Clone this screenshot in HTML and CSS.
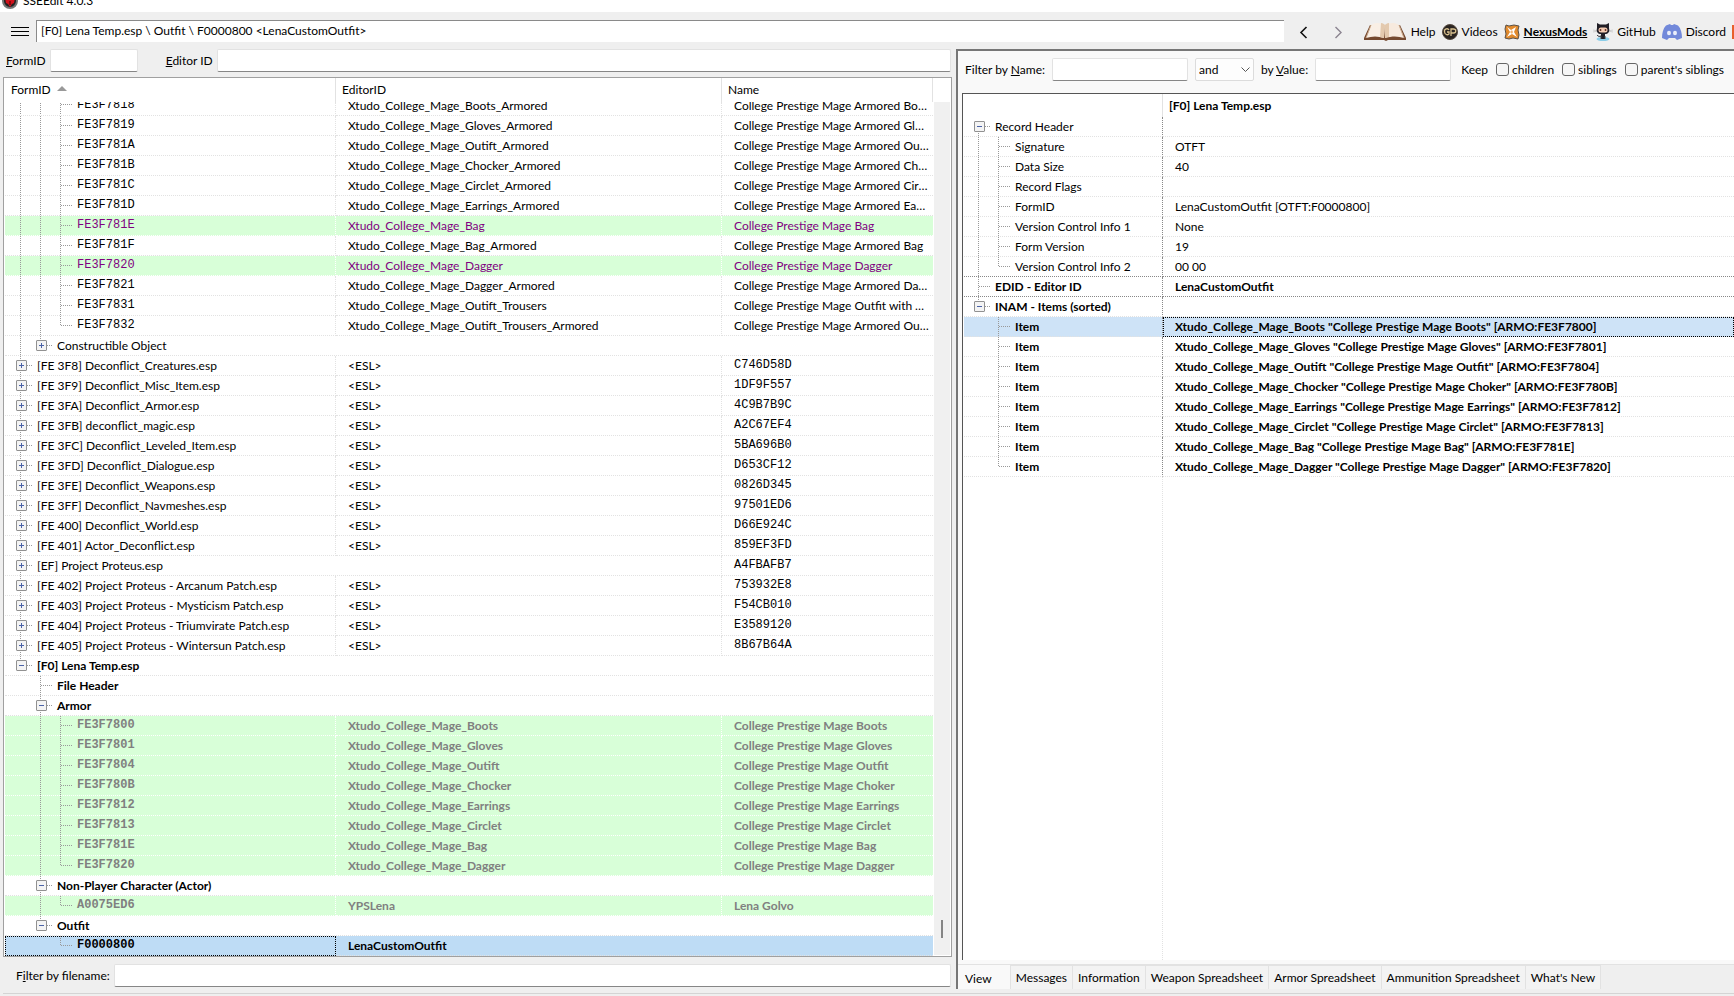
FILE: index.html
```html
<!DOCTYPE html>
<html lang="en">
<head>
    <meta charset="utf-8">
    <title>SSEEdit 4.0.3</title>
    <link rel="stylesheet" href="styles.css">
</head>
<body>
    <header class="titlebar">
        <svg width="16" height="16" viewBox="0 0 16 16"><circle cx="8" cy="8" r="7" fill="#222" stroke="#777" stroke-width="2"/><path d="M3 5l3 2 2-2 2 2 3-2-1 5-2 1-2 3-2-3-2-1z" fill="#d3121c"/><path d="M8 8v4" stroke="#400"/></svg>
        <span>SSEEdit 4.0.3</span>
    </header>

    <nav class="toolbar">
        <button class="menu-btn" aria-label="Menu"><svg width="18" height="10" viewBox="0 0 18 10"><path d="M0 .5h18M0 4.500h18M0 8.500h18" stroke="#000"/></svg></button>
        <input class="path" type="text" aria-label="Path" value="[F0] Lena Temp.esp \ Outfit \ F0000800 &lt;LenaCustomOutfit&gt;">
        <div class="history">
            <button aria-label="Back"><svg width="9" height="13" viewBox="0 0 9 13"><path d="M7.500 1L2 6.500 7.500 12" fill="none" stroke="#111" stroke-width="1.600"/></svg></button>
            <button aria-label="Forward"><svg width="9" height="13" viewBox="0 0 9 13"><path d="M1.500 1L7 6.500 1.500 12" fill="none" stroke="#8b8490" stroke-width="1.400"/></svg></button>
        </div>
        <div class="links">
            <a href="#help">
                <svg width="44" height="18" viewBox="0 0 44 18"><path d="M7 2L1 15v2h20l2 1 2-1h18v-2L37 2z" fill="#75492f"/><path d="M8 2C13-1 18 0 22 2l-1 13C15 13 9 13 3 15z" fill="#f9efe5"/><path d="M22 2c4-2 9-3 14 0l5 13c-6-2-12-2-19 0z" fill="#f7eade"/><path d="M18 0c2 0 3 1 4 2l-1 13-4-1zM26 0c-2 0-3 1-4 2v13l4-1z" fill="#e3c9ae"/><path d="M8 2L3 15M36 2l5 13" fill="none" stroke="#c9a78a"/></svg>
                Help</a>
            <a href="#videos">
                <svg width="16" height="16" viewBox="0 0 16 16"><circle cx="8" cy="8" r="7.500" fill="#2a2420" stroke="#55493f"/><path d="M7 6C6 4 2 4.500 2.500 8S6.500 11 7 10V8H5M9 12V5h2.500c3 0 3 4 0 4H9" fill="none" stroke="#d8c08e" stroke-width="1.300"/></svg>
                Videos</a>
            <a href="#nexus" class="current">
                <svg width="16" height="16" viewBox="0 0 16 16"><path d="M2 1l3 1 5-1 5 1-1 4 1 5-1 4-5-1-4 1-4-1 1-4-1-5z" fill="#e28a2c" stroke="#5a5148"/><path d="M3 3l4 3 5-3-2 5 3 5-5-3-5 3 3-5z" fill="#fff"/><path d="M8 6l1 2-1 2-2-2z" fill="#f1b271"/></svg>
                <span>NexusMods</span></a>
            <a href="#github" class="github">
                <svg width="20" height="18" viewBox="0 0 20 18"><ellipse cx="10" cy="16" rx="6.500" ry="2" fill="#8bcde8"/><path d="M0 9l5-1M0 7l5 1M15 8l5-1M15 8l5 1" stroke="#bbb" stroke-width=".6"/><path d="M4 0l3 1.500h6L16 0v5c1 4-1 6-4 6v5H8v-5C5 11 3 9 4 5z" fill="#211e26"/><rect x="5.500" y="4.500" width="9" height="5" rx="2.500" fill="#f4cbb2"/><path d="M7.500 6v2M12.500 6v2" stroke="#6b3a2d" stroke-width="1.500"/><path d="M8 13c-2 1-3 0-4-1" fill="none" stroke="#211e26"/><path d="M8 16v-3M12 16v-3" stroke="#444"/></svg>
                GitHub</a>
            <a href="#discord">
                <svg width="20" height="16" viewBox="0 0 20 16"><path d="M4 1.500L8 0l1 1h2l1-1 4 1.500c3 3 4 8 4 12.500l-5 2-2-2H7l-2 2-5-2C0 9.500 1 4.500 4 1.500z" fill="#7289da"/><ellipse cx="7" cy="9" rx="2" ry="2.200" fill="#e9edfa"/><ellipse cx="13" cy="9" rx="2" ry="2.200" fill="#e9edfa"/></svg>
                Discord</a>
            <a href="#patreon" class="patreon" aria-label="Patreon"><svg width="14" height="14" viewBox="0 0 14 14"><path d="M0 0h14v14H0z" fill="#e8602c"/></svg></a>
        </div>
    </nav>

    <main class="main">
        <section class="left">
            <div class="search">
                <label for="formid"><u>F</u>ormID</label>
                <input id="formid" class="box formid" type="text">
                <label for="editorid"><u>E</u>ditor ID</label>
                <input id="editorid" class="box grow" type="text">
            </div>

            <div class="nav-tree">
                <table class="tree">
                    <colgroup><col class="col-id"><col class="col-editor"><col></colgroup>
                    <thead>
                        <tr><th>FormID <svg class="sort" width="10" height="5" viewBox="0 0 10 5"><path d="M5 0l5 5H0z" fill="#999"/></svg></th><th>EditorID</th><th>Name</th></tr>
                    </thead>
                    <tbody>
                        <tr class="cut"><td><div class="c"><i class="v"></i><i class="v"></i><i class="t"></i><code>FE3F7818</code></div></td><td><div class="c">Xtudo_College_Mage_Boots_Armored</div></td><td><div class="c"><span>College Prestige Mage Armored Boots</span></div></td></tr>
                        <tr><td><div class="c"><i class="v"></i><i class="v"></i><i class="t"></i><code>FE3F7819</code></div></td><td>Xtudo_College_Mage_Gloves_Armored</td><td>College Prestige Mage Armored Gloves</td></tr>
                        <tr><td><div class="c"><i class="v"></i><i class="v"></i><i class="t"></i><code>FE3F781A</code></div></td><td>Xtudo_College_Mage_Outift_Armored</td><td>College Prestige Mage Armored Outfit</td></tr>
                        <tr><td><div class="c"><i class="v"></i><i class="v"></i><i class="t"></i><code>FE3F781B</code></div></td><td>Xtudo_College_Mage_Chocker_Armored</td><td>College Prestige Mage Armored Choker</td></tr>
                        <tr><td><div class="c"><i class="v"></i><i class="v"></i><i class="t"></i><code>FE3F781C</code></div></td><td>Xtudo_College_Mage_Circlet_Armored</td><td>College Prestige Mage Armored Circlet</td></tr>
                        <tr><td><div class="c"><i class="v"></i><i class="v"></i><i class="t"></i><code>FE3F781D</code></div></td><td>Xtudo_College_Mage_Earrings_Armored</td><td>College Prestige Mage Armored Earrings</td></tr>
                        <tr class="green purple"><td><div class="c"><i class="v"></i><i class="v"></i><i class="t"></i><code>FE3F781E</code></div></td><td>Xtudo_College_Mage_Bag</td><td>College Prestige Mage Bag</td></tr>
                        <tr><td><div class="c"><i class="v"></i><i class="v"></i><i class="t"></i><code>FE3F781F</code></div></td><td>Xtudo_College_Mage_Bag_Armored</td><td>College Prestige Mage Armored Bag</td></tr>
                        <tr class="green purple"><td><div class="c"><i class="v"></i><i class="v"></i><i class="t"></i><code>FE3F7820</code></div></td><td>Xtudo_College_Mage_Dagger</td><td>College Prestige Mage Dagger</td></tr>
                        <tr><td><div class="c"><i class="v"></i><i class="v"></i><i class="t"></i><code>FE3F7821</code></div></td><td>Xtudo_College_Mage_Dagger_Armored</td><td>College Prestige Mage Armored Dagger</td></tr>
                        <tr><td><div class="c"><i class="v"></i><i class="v"></i><i class="t"></i><code>FE3F7831</code></div></td><td>Xtudo_College_Mage_Outift_Trousers</td><td>College Prestige Mage Outfit with Trousers</td></tr>
                        <tr><td><div class="c"><i class="v"></i><i class="v"></i><i class="e"></i><code>FE3F7832</code></div></td><td>Xtudo_College_Mage_Outift_Trousers_Armored</td><td>College Prestige Mage Armored Outfit with Trousers</td></tr>
                        <tr><td colspan="3"><div class="c"><i class="v"></i><button class="e plus" aria-label="Expand"></button>Constructible Object</div></td></tr>
                        <tr><td><div class="c"><button class="t plus" aria-label="Expand"></button>[FE 3F8] Deconflict_Creatures.esp</div></td><td>&lt;ESL&gt;</td><td><code>C746D58D</code></td></tr>
                        <tr><td><div class="c"><button class="t plus" aria-label="Expand"></button>[FE 3F9] Deconflict_Misc_Item.esp</div></td><td>&lt;ESL&gt;</td><td><code>1DF9F557</code></td></tr>
                        <tr><td><div class="c"><button class="t plus" aria-label="Expand"></button>[FE 3FA] Deconflict_Armor.esp</div></td><td>&lt;ESL&gt;</td><td><code>4C9B7B9C</code></td></tr>
                        <tr><td><div class="c"><button class="t plus" aria-label="Expand"></button>[FE 3FB] deconflict_magic.esp</div></td><td>&lt;ESL&gt;</td><td><code>A2C67EF4</code></td></tr>
                        <tr><td><div class="c"><button class="t plus" aria-label="Expand"></button>[FE 3FC] Deconflict_Leveled_Item.esp</div></td><td>&lt;ESL&gt;</td><td><code>5BA696B0</code></td></tr>
                        <tr><td><div class="c"><button class="t plus" aria-label="Expand"></button>[FE 3FD] Deconflict_Dialogue.esp</div></td><td>&lt;ESL&gt;</td><td><code>D653CF12</code></td></tr>
                        <tr><td><div class="c"><button class="t plus" aria-label="Expand"></button>[FE 3FE] Deconflict_Weapons.esp</div></td><td>&lt;ESL&gt;</td><td><code>0826D345</code></td></tr>
                        <tr><td><div class="c"><button class="t plus" aria-label="Expand"></button>[FE 3FF] Deconflict_Navmeshes.esp</div></td><td>&lt;ESL&gt;</td><td><code>97501ED6</code></td></tr>
                        <tr><td><div class="c"><button class="t plus" aria-label="Expand"></button>[FE 400] Deconflict_World.esp</div></td><td>&lt;ESL&gt;</td><td><code>D66E924C</code></td></tr>
                        <tr><td><div class="c"><button class="t plus" aria-label="Expand"></button>[FE 401] Actor_Deconflict.esp</div></td><td>&lt;ESL&gt;</td><td><code>859EF3FD</code></td></tr>
                        <tr><td colspan="2"><div class="c"><button class="t plus" aria-label="Expand"></button>[EF] Project Proteus.esp</div></td><td><code>A4FBAFB7</code></td></tr>
                        <tr><td><div class="c"><button class="t plus" aria-label="Expand"></button>[FE 402] Project Proteus - Arcanum Patch.esp</div></td><td>&lt;ESL&gt;</td><td><code>753932E8</code></td></tr>
                        <tr><td><div class="c"><button class="t plus" aria-label="Expand"></button>[FE 403] Project Proteus - Mysticism Patch.esp</div></td><td>&lt;ESL&gt;</td><td><code>F54CB010</code></td></tr>
                        <tr><td><div class="c"><button class="t plus" aria-label="Expand"></button>[FE 404] Project Proteus - Triumvirate Patch.esp</div></td><td>&lt;ESL&gt;</td><td><code>E3589120</code></td></tr>
                        <tr><td><div class="c"><button class="t plus" aria-label="Expand"></button>[FE 405] Project Proteus - Wintersun Patch.esp</div></td><td>&lt;ESL&gt;</td><td><code>8B67B64A</code></td></tr>
                        <tr class="bold"><td colspan="3"><div class="c"><button class="e" aria-label="Collapse"></button>[F0] Lena Temp.esp</div></td></tr>
                        <tr class="bold"><td colspan="3"><div class="c"><i></i><i class="t"></i>File Header</div></td></tr>
                        <tr class="bold"><td colspan="3"><div class="c"><i></i><button class="t" aria-label="Collapse"></button>Armor</div></td></tr>
                        <tr class="green gray"><td><div class="c"><i></i><i class="v"></i><i class="t"></i><code>FE3F7800</code></div></td><td>Xtudo_College_Mage_Boots</td><td>College Prestige Mage Boots</td></tr>
                        <tr class="green gray"><td><div class="c"><i></i><i class="v"></i><i class="t"></i><code>FE3F7801</code></div></td><td>Xtudo_College_Mage_Gloves</td><td>College Prestige Mage Gloves</td></tr>
                        <tr class="green gray"><td><div class="c"><i></i><i class="v"></i><i class="t"></i><code>FE3F7804</code></div></td><td>Xtudo_College_Mage_Outift</td><td>College Prestige Mage Outfit</td></tr>
                        <tr class="green gray"><td><div class="c"><i></i><i class="v"></i><i class="t"></i><code>FE3F780B</code></div></td><td>Xtudo_College_Mage_Chocker</td><td>College Prestige Mage Choker</td></tr>
                        <tr class="green gray"><td><div class="c"><i></i><i class="v"></i><i class="t"></i><code>FE3F7812</code></div></td><td>Xtudo_College_Mage_Earrings</td><td>College Prestige Mage Earrings</td></tr>
                        <tr class="green gray"><td><div class="c"><i></i><i class="v"></i><i class="t"></i><code>FE3F7813</code></div></td><td>Xtudo_College_Mage_Circlet</td><td>College Prestige Mage Circlet</td></tr>
                        <tr class="green gray"><td><div class="c"><i></i><i class="v"></i><i class="t"></i><code>FE3F781E</code></div></td><td>Xtudo_College_Mage_Bag</td><td>College Prestige Mage Bag</td></tr>
                        <tr class="green gray"><td><div class="c"><i></i><i class="v"></i><i class="e"></i><code>FE3F7820</code></div></td><td>Xtudo_College_Mage_Dagger</td><td>College Prestige Mage Dagger</td></tr>
                        <tr class="bold"><td colspan="3"><div class="c"><i></i><button class="t" aria-label="Collapse"></button>Non-Player Character (Actor)</div></td></tr>
                        <tr class="green gray"><td><div class="c"><i></i><i class="v"></i><i class="e"></i><code>A0075ED6</code></div></td><td>YPSLena</td><td>Lena Golvo</td></tr>
                        <tr class="bold"><td colspan="3"><div class="c"><i></i><button class="e" aria-label="Collapse"></button>Outfit</div></td></tr>
                        <tr class="bold selected"><td class="focus"><div class="c"><i></i><i></i><i class="e"></i><code>F0000800</code></div></td><td colspan="2">LenaCustomOutfit</td></tr>
                    </tbody>
                </table>
                <div class="scrollbar"><div class="thumb"></div></div>
            </div>

            <div class="file-filter">
                <label for="filename">F<u>i</u>lter by filename:</label>
                <input id="filename" class="box grow" type="text">
            </div>
        </section>

        <section class="right">
            <div class="view">
                <div class="filters">
                    <label for="byname">Filter by <u>N</u>ame:</label>
                    <input id="byname" class="box filter-text" type="text">
                    <div class="combo">
                        <select aria-label="Operator"><option>and</option><option>or</option></select>
                        <svg width="9" height="5" viewBox="0 0 9 5"><path d="M.5.500l4 4 4-4" fill="none" stroke="#555"/></svg>
                    </div>
                    <label for="byvalue">by <u>V</u>alue:</label>
                    <input id="byvalue" class="box filter-text" type="text">
                    <div class="keep">
                        <span>Keep</span>
                        <label><input type="checkbox">children</label>
                        <label><input type="checkbox">siblings</label>
                        <label><input type="checkbox">parent's siblings</label>
                    </div>
                </div>
                <div class="record">
                    <table class="tree record-table">
                        <colgroup><col class="col-label"><col></colgroup>
                        <thead><tr><th></th><th>[F0] Lena Temp.esp</th></tr></thead>
                        <tbody>
                            <tr><td><div class="c"><button class="f" aria-label="Collapse"></button>Record Header</div></td><td></td></tr>
                            <tr><td><div class="c"><i class="v"></i><i class="t"></i>Signature</div></td><td>OTFT</td></tr>
                            <tr><td><div class="c"><i class="v"></i><i class="t"></i>Data Size</div></td><td>40</td></tr>
                            <tr><td><div class="c"><i class="v"></i><i class="t"></i>Record Flags</div></td><td></td></tr>
                            <tr><td><div class="c"><i class="v"></i><i class="t"></i>FormID</div></td><td>LenaCustomOutfit [OTFT:F0000800]</td></tr>
                            <tr><td><div class="c"><i class="v"></i><i class="t"></i>Version Control Info 1</div></td><td>None</td></tr>
                            <tr><td><div class="c"><i class="v"></i><i class="t"></i>Form Version</div></td><td>19</td></tr>
                            <tr class="major"><td><div class="c"><i class="v"></i><i class="e"></i>Version Control Info 2</div></td><td>00 00</td></tr>
                            <tr class="bold major"><td><div class="c"><i class="t"></i>EDID - Editor ID</div></td><td>LenaCustomOutfit</td></tr>
                            <tr class="bold"><td><div class="c"><button class="e" aria-label="Collapse"></button>INAM - Items (sorted)</div></td><td></td></tr>
                            <tr class="bold current-row"><td><div class="c"><i></i><i class="t"></i>Item</div></td><td class="focus">Xtudo_College_Mage_Boots "College Prestige Mage Boots" [ARMO:FE3F7800]</td></tr>
                            <tr class="bold"><td><div class="c"><i></i><i class="t"></i>Item</div></td><td>Xtudo_College_Mage_Gloves "College Prestige Mage Gloves" [ARMO:FE3F7801]</td></tr>
                            <tr class="bold"><td><div class="c"><i></i><i class="t"></i>Item</div></td><td>Xtudo_College_Mage_Outift "College Prestige Mage Outfit" [ARMO:FE3F7804]</td></tr>
                            <tr class="bold"><td><div class="c"><i></i><i class="t"></i>Item</div></td><td>Xtudo_College_Mage_Chocker "College Prestige Mage Choker" [ARMO:FE3F780B]</td></tr>
                            <tr class="bold"><td><div class="c"><i></i><i class="t"></i>Item</div></td><td>Xtudo_College_Mage_Earrings "College Prestige Mage Earrings" [ARMO:FE3F7812]</td></tr>
                            <tr class="bold"><td><div class="c"><i></i><i class="t"></i>Item</div></td><td>Xtudo_College_Mage_Circlet "College Prestige Mage Circlet" [ARMO:FE3F7813]</td></tr>
                            <tr class="bold"><td><div class="c"><i></i><i class="t"></i>Item</div></td><td>Xtudo_College_Mage_Bag "College Prestige Mage Bag" [ARMO:FE3F781E]</td></tr>
                            <tr class="bold"><td><div class="c"><i></i><i class="e"></i>Item</div></td><td>Xtudo_College_Mage_Dagger "College Prestige Mage Dagger" [ARMO:FE3F7820]</td></tr>
                        </tbody>
                    </table>
                    <div class="rest"></div>
                </div>
            </div>
            <div class="tabs">
                <button class="active">View</button>
                <button>Messages</button>
                <button>Information</button>
                <button>Weapon Spreadsheet</button>
                <button>Armor Spreadsheet</button>
                <button>Ammunition Spreadsheet</button>
                <button>What's New</button>
            </div>
        </section>
    </main>
    <footer class="status"></footer>
</body>
</html>
```
FILE: styles.css
```css
* {
    box-sizing: border-box;
}
body {
    margin: 0;
    height: 100vh;
    display: flex;
    flex-direction: column;
    overflow: hidden;
    background: #efefef;
    color: #000;
    font: 12px/16px Lato, "Open Sans", sans-serif;
}
button, input, select {
    font: inherit;
    color: inherit;
}
button {
    border: 0;
    padding: 0;
    background: none;
}
svg {
    display: block;
    flex: none;
}

/* title bar and toolbar */
.titlebar {
    display: flex;
    align-items: flex-end;
    gap: 5px;
    height: 12px;
    flex: none;
    padding: 0 2px 3px;
    background: #fff;
    overflow: hidden;
}
.toolbar {
    display: flex;
    align-items: center;
    height: 37px;
    flex: none;
    padding-top: 3px;
    white-space: nowrap;
    overflow: hidden;
}
.menu-btn {
    margin: 0 7px 0 11px;
}
.path {
    flex: 1;
    min-width: 0;
    height: 22px;
    margin-bottom: 3px;
    padding: 0 4px 2px;
    border: 0;
    border-top: 1px solid #8a8a8a;
    border-left: 1px solid #8a8a8a;
    background: #fff;
}
.history {
    display: flex;
    gap: 26px;
    padding: 0 20px 0 15px;
}
.links {
    display: flex;
    gap: 6px;
}
.links a {
    display: flex;
    align-items: center;
    gap: 4px;
    color: inherit;
    text-decoration: none;
}
.links .current {
    font-weight: bold;
    text-decoration: underline;
}
.patreon {
    width: 2px;
    overflow: hidden;
}

/* two panes */
.main {
    flex: 1;
    min-height: 0;
    display: grid;
    grid-template-columns: 956fr 778fr;
    grid-template-rows: minmax(0, 1fr);
}
.left {
    display: flex;
    flex-direction: column;
    min-width: 0;
    padding: 0 4px 6px 3px;
}
.box {
    height: 23px;
    min-width: 0;
    border: 1px solid #e2e2e2;
    border-bottom-color: #868686;
    border-radius: 2px;
    background: #fff;
}
.grow {
    flex: 1;
}
.search {
    display: flex;
    align-items: center;
    gap: 4px;
    height: 28px;
    padding: 0 1px 5px 3px;
}
.formid {
    width: 88px;
    margin-right: 24px;
}
.nav-tree {
    flex: 1;
    min-height: 0;
    display: grid;
    grid-template-columns: 1fr 17px;
    align-items: start;
    padding: 0 1px 0 1px;
    border: 1px solid #a0a0a0;
    background: #fff;
    overflow: hidden;
}
.scrollbar {
    align-self: stretch;
    display: flex;
    align-items: flex-end;
    justify-content: center;
    margin: 24px 0 1px 1px;
    padding-bottom: 17px;
    background: #f0f0f0;
}
.thumb {
    width: 2px;
    height: 18px;
    background: #858585;
}
.file-filter {
    display: flex;
    align-items: center;
    gap: 4px;
    padding: 7px 1px 0 13px;
}

/* trees */
.tree {
    width: 100%;
    table-layout: fixed;
    border-collapse: separate;
    border-spacing: 0;
}
.col-id {
    width: 331px;
}
.col-editor {
    width: 386px;
}
.col-label {
    width: 199px;
}
.tree th {
    height: 24px;
    padding: 0 6px;
    border-right: 1px solid #e2e2e2;
    font-weight: normal;
    text-align: left;
    white-space: nowrap;
}
.sort {
    display: inline-block;
    margin: 0 0 3px 3px;
}
.tree td {
    height: 20px;
    padding: 0 8px 0 12px;
    border-right: 1px dotted #e2e2e2;
    border-bottom: 1px dotted #e2e2e2;
    line-height: 19px;
    white-space: nowrap;
    overflow: hidden;
    text-overflow: ellipsis;
}
.tree td:first-child {
    padding: 0 0 0 7px;
}
.tree td:last-child {
    border-right: 0;
    padding-right: 4px;
}
.c {
    display: flex;
    align-items: center;
    height: 19px;
}
.cut td {
    height: 14px;
}
.cut .c {
    height: 13px;
    align-items: flex-end;
    overflow: hidden;
}
.cut .c span {
    overflow: hidden;
    text-overflow: ellipsis;
}
code {
    display: block;
    font: 12px/19px "Liberation Mono", monospace;
}
.bold, .gray, .bold code, .gray code {
    font-weight: bold;
}
.green {
    background: #d8ffd8;
}
.green td {
    border-color: #fff;
}
.purple {
    color: #800080;
}
.gray {
    color: #808080;
}
.selected {
    background: #bedcf5;
}
.tree .focus {
    outline: 1px dotted #000;
    outline-offset: -1px;
}

/* guide lines: v passes by, t branches, e is the last branch, f the first */
.c i, .c button {
    --dots: repeating-linear-gradient(#999 0 1px, transparent 1px 2px);
    --dash: repeating-linear-gradient(90deg, #999 0 1px, transparent 1px 2px);
    flex: none;
    width: 20px;
    height: 20px;
    background-repeat: no-repeat;
}
.c .v {
    background-image: var(--dots);
    background-size: 1px 20px;
    background-position: 8px 0;
}
.c .t, .c .e, .c .f {
    margin-right: 5px;
    background-image: var(--dots), var(--dash);
    background-size: 1px 20px, 12px 1px;
    background-position: 8px 0, 9px 9px;
}
.c .e {
    background-size: 1px 10px, 12px 1px;
}
.c .f {
    background-size: 1px 10px, 12px 1px;
    background-position: 8px 10px, 9px 9px;
}
.c button::before {
    content: "";
    display: block;
    width: 9px;
    height: 9px;
    margin-left: 4px;
    border: 1px solid #919191;
    border-radius: 1px;
    background: linear-gradient(#4b63a7, #4b63a7) center / 5px 1px no-repeat, #f4f4f4;
}
.c .plus::before {
    background: linear-gradient(#4b63a7, #4b63a7) center / 5px 1px no-repeat, linear-gradient(#4b63a7, #4b63a7) center / 1px 5px no-repeat, #f4f4f4;
}

/* record view */
.right {
    display: flex;
    flex-direction: column;
    min-width: 0;
    margin-bottom: 4px;
    border: 2px solid #767676;
    border-right: 0;
    border-bottom: 0;
    overflow: hidden;
}
.view {
    flex: 1;
    min-height: 0;
    display: flex;
    flex-direction: column;
    padding: 0 0 4px 4px;
    background: #f9f9f9;
    border-bottom: 1px solid #e2e2e2;
}
.filters {
    display: flex;
    align-items: center;
    gap: 7px;
    padding: 7px 0 12px 3px;
    white-space: nowrap;
}
.filter-text {
    width: 136px;
}
.combo {
    display: grid;
    align-items: center;
    width: 59px;
}
.combo select, .combo svg {
    grid-area: 1 / 1;
}
.combo select {
    appearance: none;
    height: 23px;
    padding: 0 3px;
    border: 1px solid #dcdcdc;
    border-radius: 2px;
    background: #fdfdfd;
}
.combo svg {
    justify-self: end;
    margin-right: 4px;
    pointer-events: none;
}
.keep {
    display: flex;
    gap: 8px;
    padding-left: 3px;
}
.keep label {
    display: flex;
    align-items: center;
    gap: 3px;
}
.keep input {
    appearance: none;
    width: 13px;
    height: 13px;
    margin: 0;
    border: 1px solid #666;
    border-radius: 3px;
    background: #f6f6f6;
}
.record {
    flex: 1;
    min-height: 0;
    display: flex;
    flex-direction: column;
    padding-left: 1px;
    border-top: 1px solid #555;
    border-left: 1px solid #555;
    background: #fff;
    overflow: hidden;
}
.record-table th {
    height: 23px;
    font-weight: bold;
}
.record-table th:last-child {
    border-right: 0;
}
.record-table td:first-child {
    padding-left: 6px;
    border-right-color: #888;
}
.record-table .major td {
    border-bottom-color: #888;
}
.current-row {
    background: #cee3f7;
}
.rest {
    flex: 1;
    width: 199px;
    border-right: 1px dotted #e2e2e2;
}
.tabs {
    display: flex;
    height: 24px;
    flex: none;
    white-space: nowrap;
}
.tabs button {
    padding: 0 5px;
    border: 1px solid #e2e2e2;
    border-left: 0;
    border-bottom: 0;
    background: #f3f3f3;
}
.tabs .active {
    padding: 4px 18px 0 7px;
    border-top: 0;
    background: #f9f9f9;
}
.status {
    height: 3px;
    flex: none;
    margin-left: 3px;
    border-top: 1px solid #d4d4d4;
}
```
